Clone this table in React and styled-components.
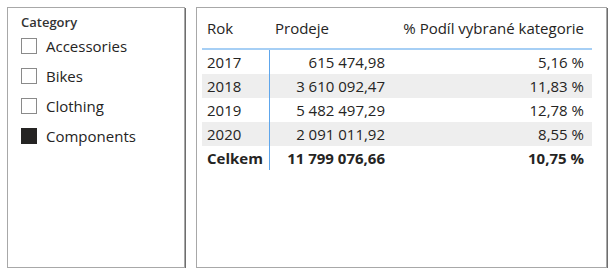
import React from "react";
import styled, { createGlobalStyle } from "styled-components";

const Global = createGlobalStyle`
  html, body { margin: 0; padding: 0; background: #ffffff; }
  body { font-family: "Open Sans", "Noto Sans", sans-serif; color: #252423; }
`;

const Page = styled.div`
  display: flex;
  gap: 11px;
  padding: 7px 0 0 7px;
`;

const Panel = styled.div`
  box-sizing: border-box;
  width: ${(p) => p.$w}px;
  height: 261px;
  border: 1px solid #a8a8a8;
  box-shadow: 1px 1px 0 #6e6e6e;
  background: #fff;
`;

const Slicer = styled.div`
  display: flex;
  flex-direction: column;
  padding: 5px 0 0 13px;
`;

const SlicerTitle = styled.div`
  font-size: 13px;
  font-weight: 600;
  color: #333;
  line-height: 18px;
  margin-bottom: 7px;
`;

const Item = styled.div`
  display: flex;
  align-items: center;
  gap: 9px;
  height: 30px;
  margin-top: -7px;
  margin-bottom: 7px;
  font-size: 15px;
`;

const Box = styled.span`
  box-sizing: border-box;
  width: 16px;
  height: 16px;
  border: 1px solid ${(p) => (p.$on ? "#252423" : "#8a8a8a")};
  background: ${(p) => (p.$on ? "#252423" : "#fff")};
`;

const Table = styled.div`
  display: grid;
  grid-template-columns: 68px 120px 202px;
  margin: 0 0 0 5px;
  font-size: 15px;
`;

const Head = styled.div`
  height: 40px;
  display: flex;
  align-items: center;
  justify-content: ${(p) => (p.$right ? "flex-end" : "flex-start")};
  padding: 0 ${(p) => (p.$right ? "8px" : "0")} 0 ${(p) => (p.$right ? "0" : "5px")};
  border-bottom: 2px solid #a6cff5;
  white-space: nowrap;
`;

const Cell = styled.div`
  height: 24px;
  display: flex;
  align-items: center;
  justify-content: ${(p) => (p.$right ? "flex-end" : "flex-start")};
  padding: 0 ${(p) => (p.$right ? "5px" : "0")} 0 ${(p) => (p.$right ? "0" : "5px")};
  padding-right: ${(p) => (p.$last ? "8px" : undefined)};
  background: ${(p) => (p.$stripe ? "#eeeeee" : "transparent")};
  font-weight: ${(p) => (p.$bold ? 700 : 400)};
  border-right: ${(p) => (p.$divider ? "1px solid #5ea6ec" : "none")};
  white-space: nowrap;
`;

const rows = [
  ["2017", "615 474,98", "5,16 %"],
  ["2018", "3 610 092,47", "11,83 %"],
  ["2019", "5 482 497,29", "12,78 %"],
  ["2020", "2 091 011,92", "8,55 %"],
];

const categories = [
  ["Accessories", false],
  ["Bikes", false],
  ["Clothing", false],
  ["Components", true],
];

export default function App() {
  return (
    <>
      <Global />
      <Page>
        <Panel $w={178}>
          <Slicer>
            <SlicerTitle>Category</SlicerTitle>
            {categories.map(([name, on]) => (
              <Item key={name}>
                <Box $on={on} />
                {name}
              </Item>
            ))}
          </Slicer>
        </Panel>
        <Panel $w={411}>
          <Table>
            <Head>Rok</Head>
            <Head>Prodeje</Head>
            <Head $right>% Podíl vybrané kategorie</Head>
            {rows.map(([y, v, p], i) => (
              <React.Fragment key={y}>
                <Cell $stripe={i % 2 === 1} $divider>{y}</Cell>
                <Cell $stripe={i % 2 === 1} $right>{v}</Cell>
                <Cell $stripe={i % 2 === 1} $right $last>{p}</Cell>
              </React.Fragment>
            ))}
            <Cell $bold $divider>Celkem</Cell>
            <Cell $bold $right>11 799 076,66</Cell>
            <Cell $bold $right $last>10,75 %</Cell>
          </Table>
        </Panel>
      </Page>
    </>
  );
}
